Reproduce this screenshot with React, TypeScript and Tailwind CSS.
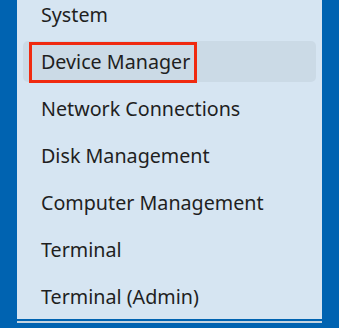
import React from 'react';

const items = [
  'System',
  'Device Manager',
  'Network Connections',
  'Disk Management',
  'Computer Management',
  'Terminal',
  'Terminal (Admin)',
];

export default function App() {
  return (
    <div className="h-[328px] w-[339px] overflow-hidden bg-[#0063b1] pl-[17px] pr-[17px]">
      <div
        className="h-full bg-[#d6e5f2] text-[#1f1f1f]"
        style={{ fontFamily: '"Noto Sans", "Open Sans", sans-serif' }}
      >
        <div className="-mt-[9px]">
          {items.map((label) => {
            const active = label === 'Device Manager';
            return (
              <div key={label} className="relative h-[47px] px-[6px] py-[3px]">
                <div
                  className={`flex h-[41px] items-center rounded-[5px] pl-[18px] text-[19.7px] ${
                    active ? 'bg-[#cbdae6]' : ''
                  }`}
                >
                  {label}
                </div>
                {active && (
                  <div className="absolute left-[12px] top-[4px] h-[41px] w-[168px] border-[3px] border-[#f02a10]" />
                )}
              </div>
            );
          })}
        </div>
        <div className="mt-[1px] h-[2px] bg-[#c4d4e1]" />
      </div>
    </div>
  );
}
